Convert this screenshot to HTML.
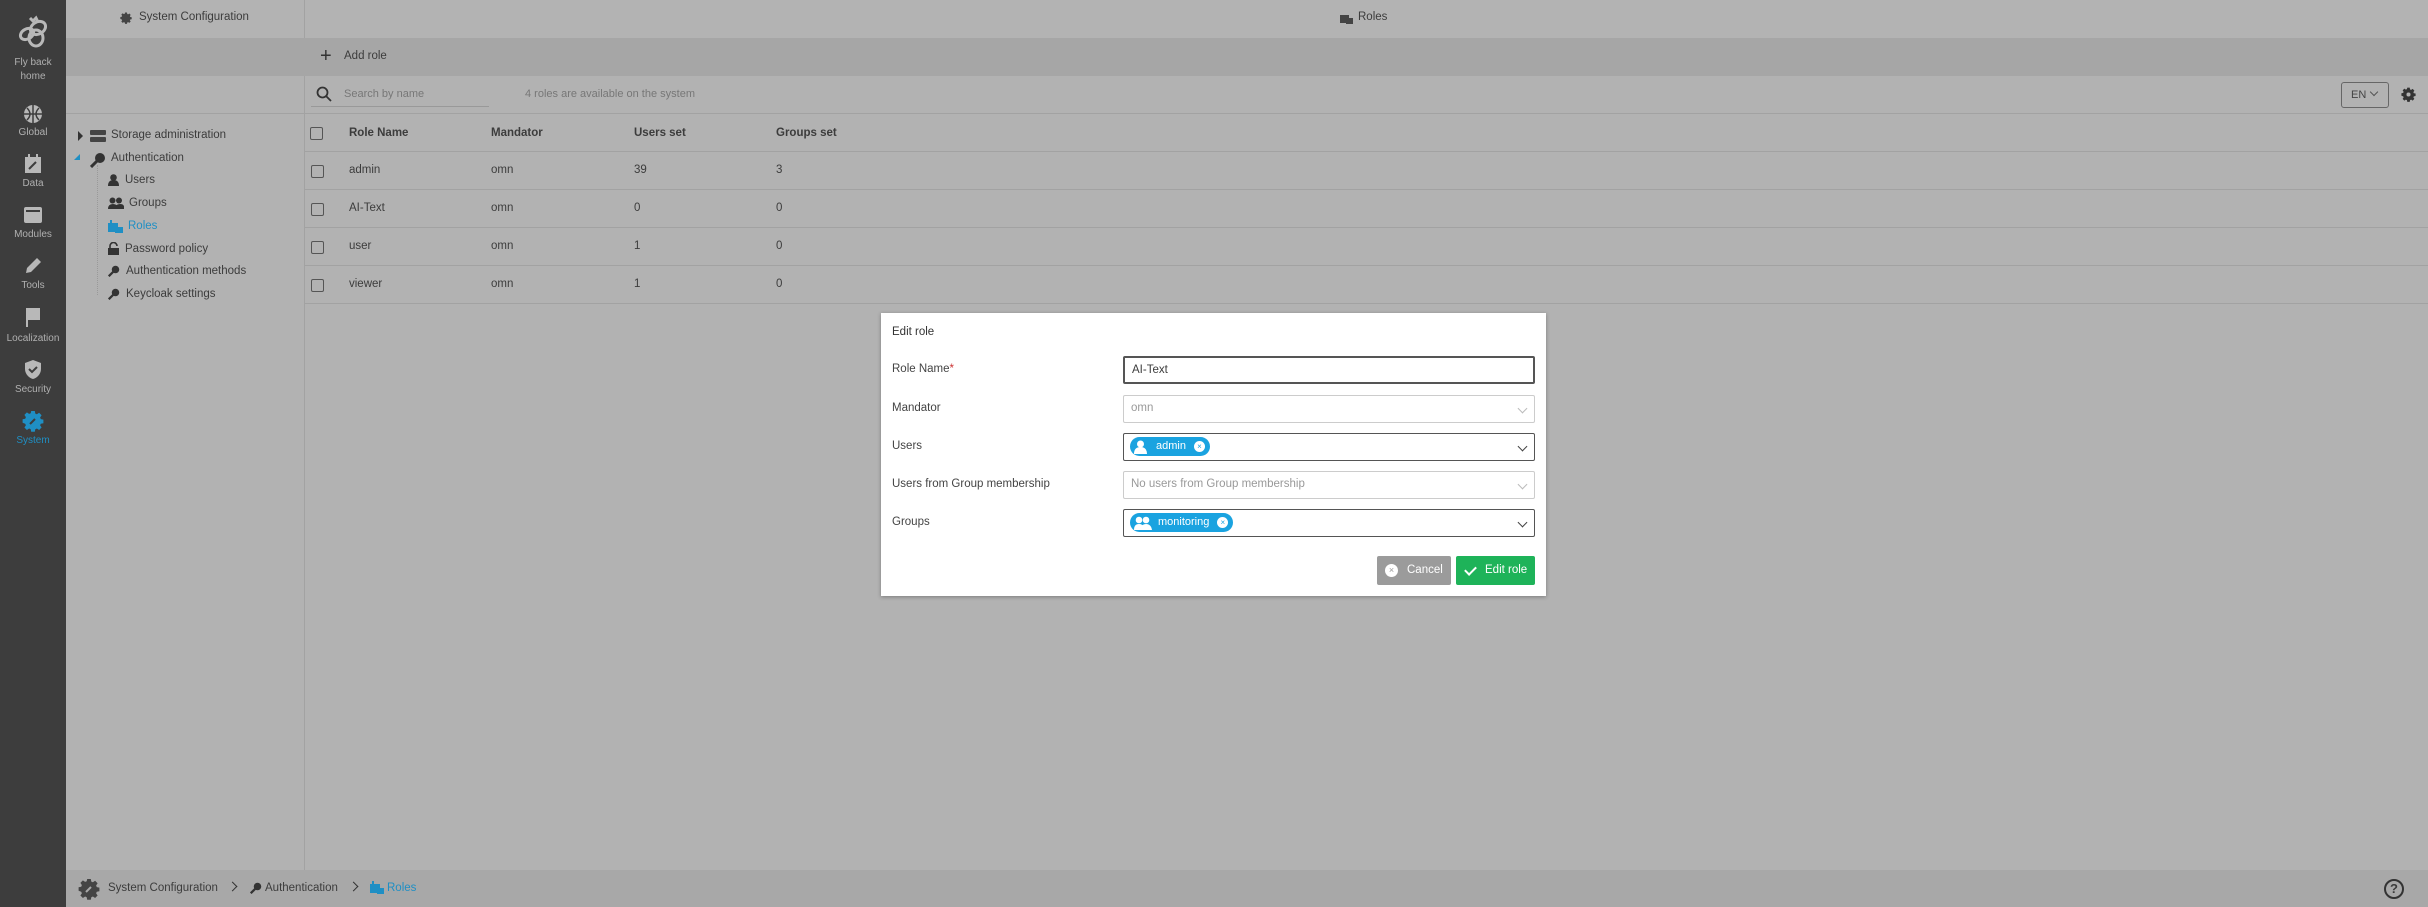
<!DOCTYPE html>
<html><head><meta charset="utf-8"><style>
*{box-sizing:border-box;margin:0;padding:0}
body{width:2428px;height:907px;position:relative;overflow:hidden;background:#b2b2b2;font-family:"Liberation Sans",sans-serif;font-size:11.5px;color:#3c3c3c}
.a{position:absolute}
.sb{left:0;top:0;width:66px;height:907px;background:#3d3d3d}
.si{position:absolute;left:0;width:66px;text-align:center;color:#b0b0b0;font-size:10px}
.line{background:#a2a2a2}
.cb{position:absolute;width:13px;height:13px;border:1.5px solid #555;border-radius:2px}
.t{position:absolute;white-space:nowrap}
.lab{position:absolute;left:11px;color:#444;font-size:11.5px}
.inp{position:absolute;left:242px;width:412px;height:28px;border:1.5px solid #555;border-radius:2px;background:#fff;font-size:11.5px;line-height:25px;padding-left:7px}
.dis{border:1.5px solid #ccc;color:#999}
.chev{position:absolute;right:8px;top:9px;width:7px;height:7px;border-right:1.5px solid #444;border-bottom:1.5px solid #444;transform:rotate(45deg)}
.dis .chev{border-color:#bbb}
.chip{position:absolute;left:6px;top:3px;height:19px;border-radius:10px;background:#1aa3e0;color:#fff;font-size:11px;line-height:19px;padding-left:26px;padding-right:24px}
.chip .x{position:absolute;right:5px;top:4px;width:11px;height:11px;border-radius:50%;background:#fff;color:#1aa3e0;font-size:8px;line-height:11px;text-align:center}
.chip .u{position:absolute;left:4px;top:3px;width:13px;height:14px}
.bc{position:absolute;top:883px;width:7px;height:7px;border-right:1.8px solid #333;border-top:1.8px solid #333;transform:rotate(45deg)}
</style></head><body>
<svg width="0" height="0" style="position:absolute"><defs><path id="cog" d="M9.2 1h3.6l.5 2.6 1.6.7 2.2-1.5 2.5 2.5-1.5 2.2.7 1.6 2.6.5v3.6l-2.6.5-.7 1.6 1.5 2.2-2.5 2.5-2.2-1.5-1.6.7-.5 2.6H9.2l-.5-2.6-1.6-.7-2.2 1.5-2.5-2.5 1.5-2.2-.7-1.6L.6 12.8V9.2l2.6-.5.7-1.6-1.5-2.2 2.5-2.5 2.2 1.5 1.6-.7z"/></defs></svg>
<div class="a sb"></div>
<svg class="a" style="left:16px;top:14px" width="34" height="36" viewBox="0 0 34 36" fill="none" stroke="#b8b8b8" stroke-width="3"><path d="M14 4l3 3 3-3 2 4" /><ellipse cx="22" cy="14" rx="8" ry="6" transform="rotate(-30 22 14)"/><ellipse cx="11" cy="20" rx="7" ry="5" transform="rotate(-30 11 20)"/><ellipse cx="20" cy="24" rx="7" ry="8"/></svg>
<div class="si" style="top:56px;line-height:14px">Fly back<br>home</div>
<svg class="a" style="left:23px;top:104px" width="20" height="20" viewBox="0 0 20 20"><circle cx="10" cy="10" r="9" fill="#b8b8b8"/><path d="M1 10h18M10 1v18M4 4q6 6 0 12M16 4q-6 6 0 12" stroke="#3d3d3d" stroke-width="1.5" fill="none"/></svg>
<div class="si" style="top:127px">Global</div>
<svg class="a" style="left:24px;top:154px" width="18" height="20" viewBox="0 0 18 20"><rect x="1" y="3" width="16" height="16" fill="#b8b8b8"/><rect x="4" y="0" width="2" height="4" fill="#b8b8b8"/><rect x="12" y="0" width="2" height="4" fill="#b8b8b8"/><path d="M5 15l7-7" stroke="#3d3d3d" stroke-width="2"/></svg>
<div class="si" style="top:178px">Data</div>
<svg class="a" style="left:23px;top:206px" width="20" height="18"><rect x="1" y="1" width="18" height="16" rx="2" fill="#b8b8b8"/><rect x="3" y="4" width="14" height="2" fill="#3d3d3d"/></svg>
<div class="si" style="top:229px">Modules</div>
<svg class="a" style="left:23px;top:256px" width="20" height="20" viewBox="0 0 20 20"><path d="M3 17l1-5 10-10 4 4-10 10z" fill="#b8b8b8"/></svg>
<div class="si" style="top:280px">Tools</div>
<svg class="a" style="left:24px;top:307px" width="18" height="20"><path d="M2 1h14v12H4v7H2z" fill="#b8b8b8"/></svg>
<div class="si" style="top:333px">Localization</div>
<svg class="a" style="left:23px;top:359px" width="20" height="21" viewBox="0 0 20 21"><path d="M10 1l8 3v6c0 5-4 9-8 10-4-1-8-5-8-10V4z" fill="#b8b8b8"/><path d="M6 10l3 3 5-5" stroke="#3d3d3d" stroke-width="2" fill="none"/></svg>
<div class="si" style="top:384px">Security</div>
<svg class="a" style="left:22px;top:410px" width="22" height="22" viewBox="0 0 22 22"><use href="#cog" fill="#1f8fc4"/><path d="M8 14l5-5" stroke="#3d3d3d" stroke-width="2"/></svg>
<div class="si" style="top:435px;color:#1f8fc4">System</div>

<!-- header -->
<div class="a" style="left:66px;top:0;width:2362px;height:38px;background:#b3b3b3"></div>
<div class="a line" style="left:304px;top:0;width:1px;height:870px"></div>
<div class="a" style="left:66px;top:38px;width:2362px;height:38px;background:#a6a6a6"></div>
<svg class="a" style="left:120px;top:12px" width="12" height="12" viewBox="0 0 22 22"><use href="#cog" fill="#444"/></svg>
<div class="t" style="left:139px;top:11px">System Configuration</div>
<svg class="a" style="left:1340px;top:12px" width="13" height="12"><rect x="0" y="3" width="9" height="8" fill="#444"/><rect x="6" y="6" width="7" height="6" fill="#444"/></svg>
<div class="t" style="left:1358px;top:11px">Roles</div>
<div class="t" style="left:320px;top:45px;font-size:20px;font-weight:300;color:#333">+</div>
<div class="t" style="left:344px;top:50px">Add role</div>

<!-- search row -->
<svg class="a" style="left:316px;top:86px" width="16" height="16"><circle cx="6.5" cy="6.5" r="5" stroke="#333" stroke-width="1.8" fill="none"/><path d="M10 10l5 5" stroke="#333" stroke-width="1.8"/></svg>
<div class="t" style="left:344px;top:88px;color:#777;font-size:11px">Search by name</div>
<div class="a" style="left:311px;top:106px;width:178px;height:1px;background:#999"></div>
<div class="t" style="left:525px;top:88px;color:#777;font-size:11px">4 roles are available on the system</div>
<div class="a" style="left:2341px;top:82px;width:48px;height:26px;border:1px solid #666;border-radius:3px"></div>
<div class="t" style="left:2351px;top:89px;color:#444;font-size:11px">EN</div>
<div class="a" style="left:2371px;top:89px;width:6px;height:6px;border-right:1px solid #555;border-bottom:1px solid #555;transform:rotate(45deg)"></div>
<svg class="a" style="left:2401px;top:87px" width="15" height="15" viewBox="0 0 22 22"><use href="#cog" fill="#333"/><circle cx="11" cy="11" r="3" fill="#b2b2b2"/></svg>
<div class="a line" style="left:66px;top:113px;width:2362px;height:1px"></div>

<!-- tree -->
<div class="a" style="left:78px;top:131px;width:0;height:0;border-left:5px solid #333;border-top:5px solid transparent;border-bottom:5px solid transparent"></div>
<svg class="a" style="left:90px;top:129px" width="16" height="14"><rect x="0" y="1" width="16" height="5" rx="1" fill="#444"/><rect x="0" y="8" width="16" height="5" rx="1" fill="#444"/></svg>
<div class="t" style="left:111px;top:129px">Storage administration</div>
<div class="a" style="left:74px;top:154px;width:0;height:0;border-right:6px solid #1f8fc4;border-top:6px solid transparent"></div>
<svg class="a" style="left:90px;top:152px" width="16" height="16" viewBox="0 0 16 16"><circle cx="10" cy="6" r="5" fill="#333"/><path d="M7 9l-6 6" stroke="#333" stroke-width="3"/></svg>
<div class="t" style="left:111px;top:152px">Authentication</div>
<div class="a" style="left:97px;top:165px;width:0;height:130px;border-left:1px dotted #999"></div>
<svg class="a" style="left:108px;top:174px" width="11" height="12"><circle cx="5.5" cy="3.5" r="3.3" fill="#333"/><path d="M0 12q0-6 5.5-6t5.5 6z" fill="#333"/></svg>
<div class="t" style="left:125px;top:174px">Users</div>
<svg class="a" style="left:108px;top:197px" width="16" height="12"><circle cx="4.5" cy="3.5" r="3" fill="#333"/><circle cx="11" cy="3.5" r="3" fill="#333"/><path d="M0 12q0-5 5-5t5 5zM7 12q0-5 5-5t4 5z" fill="#333"/></svg>
<div class="t" style="left:129px;top:197px">Groups</div>
<svg class="a" style="left:108px;top:220px" width="15" height="13"><rect x="0" y="3" width="10" height="9" fill="#1f8fc4"/><rect x="2" y="0" width="2" height="4" fill="#1f8fc4"/><rect x="7" y="7" width="8" height="6" fill="#1f8fc4"/></svg>
<div class="t" style="left:128px;top:220px;color:#1f8fc4">Roles</div>
<svg class="a" style="left:108px;top:242px" width="11" height="13"><path d="M2 6V4a3.5 3.5 0 017 0" stroke="#333" stroke-width="1.6" fill="none"/><rect x="0" y="6" width="11" height="7" fill="#333"/></svg>
<div class="t" style="left:125px;top:243px">Password policy</div>
<svg class="a" style="left:108px;top:265px" width="12" height="12" viewBox="0 0 16 16"><circle cx="10" cy="6" r="5" fill="#333"/><path d="M7 9l-6 6" stroke="#333" stroke-width="3"/></svg>
<div class="t" style="left:126px;top:265px">Authentication methods</div>
<svg class="a" style="left:108px;top:288px" width="12" height="12" viewBox="0 0 16 16"><circle cx="10" cy="6" r="5" fill="#333"/><path d="M7 9l-6 6" stroke="#333" stroke-width="3"/></svg>
<div class="t" style="left:126px;top:288px">Keycloak settings</div>

<!-- table -->
<div class="cb" style="left:310px;top:127px"></div>
<div class="t" style="left:349px;top:127px;font-weight:bold">Role Name</div>
<div class="t" style="left:491px;top:127px;font-weight:bold">Mandator</div>
<div class="t" style="left:634px;top:127px;font-weight:bold">Users set</div>
<div class="t" style="left:776px;top:127px;font-weight:bold">Groups set</div>
<div class="a line" style="left:305px;top:151px;width:2123px;height:1px"></div>
<div class="cb" style="left:311px;top:165px"></div><div class="t" style="left:349px;top:164px">admin</div><div class="t" style="left:491px;top:164px">omn</div><div class="t" style="left:634px;top:164px">39</div><div class="t" style="left:776px;top:164px">3</div>
<div class="a line" style="left:305px;top:189px;width:2123px;height:1px"></div>
<div class="cb" style="left:311px;top:203px"></div><div class="t" style="left:349px;top:202px">AI-Text</div><div class="t" style="left:491px;top:202px">omn</div><div class="t" style="left:634px;top:202px">0</div><div class="t" style="left:776px;top:202px">0</div>
<div class="a line" style="left:305px;top:227px;width:2123px;height:1px"></div>
<div class="cb" style="left:311px;top:241px"></div><div class="t" style="left:349px;top:240px">user</div><div class="t" style="left:491px;top:240px">omn</div><div class="t" style="left:634px;top:240px">1</div><div class="t" style="left:776px;top:240px">0</div>
<div class="a line" style="left:305px;top:265px;width:2123px;height:1px"></div>
<div class="cb" style="left:311px;top:279px"></div><div class="t" style="left:349px;top:278px">viewer</div><div class="t" style="left:491px;top:278px">omn</div><div class="t" style="left:634px;top:278px">1</div><div class="t" style="left:776px;top:278px">0</div>
<div class="a line" style="left:305px;top:303px;width:2123px;height:1px"></div>

<!-- footer -->
<div class="a" style="left:66px;top:870px;width:2362px;height:37px;background:#a8a8a8"></div>
<svg class="a" style="left:78px;top:878px" width="22" height="22" viewBox="0 0 22 22"><use href="#cog" fill="#444"/><path d="M8 14l5-5" stroke="#a8a8a8" stroke-width="2"/></svg>
<div class="t" style="left:108px;top:882px">System Configuration</div>
<div class="bc" style="left:229px"></div>
<svg class="a" style="left:250px;top:882px" width="12" height="12" viewBox="0 0 16 16"><circle cx="10" cy="6" r="5" fill="#333"/><path d="M7 9l-6 6" stroke="#333" stroke-width="3"/></svg>
<div class="t" style="left:265px;top:882px">Authentication</div>
<div class="bc" style="left:350px"></div>
<svg class="a" style="left:370px;top:881px" width="14" height="13"><rect x="0" y="3" width="10" height="9" fill="#1f8fc4"/><rect x="2" y="0" width="2" height="4" fill="#1f8fc4"/><rect x="7" y="7" width="7" height="6" fill="#1f8fc4"/></svg>
<div class="t" style="left:387px;top:882px;color:#1f8fc4">Roles</div>
<div class="a" style="left:2384px;top:879px;width:20px;height:20px;border:2px solid #333;border-radius:50%;text-align:center;font-weight:bold;font-size:13px;line-height:16px">?</div>

<!-- modal -->
<div class="a" style="left:881px;top:313px;width:665px;height:283px;background:#fff;box-shadow:0 1px 4px rgba(0,0,0,.3)">
<div class="t" style="left:11px;top:13px;font-size:11.5px;color:#333">Edit role</div>
<div class="lab" style="top:50px">Role Name<span style="color:#c33">*</span></div>
<div class="inp" style="top:43px;border-width:2px">AI-Text</div>
<div class="lab" style="top:89px">Mandator</div>
<div class="inp dis" style="top:82px">omn<div class="chev"></div></div>
<div class="lab" style="top:127px">Users</div>
<div class="inp" style="top:120px"><div class="chip"><svg class="u" viewBox="0 0 13 14"><circle cx="6.5" cy="4" r="3.5" fill="#fff"/><path d="M0 14q0-7 6.5-7t6.5 7z" fill="#fff"/></svg>admin<div class="x">×</div></div><div class="chev"></div></div>
<div class="lab" style="top:165px">Users from Group membership</div>
<div class="inp dis" style="top:158px">No users from Group membership<div class="chev"></div></div>
<div class="lab" style="top:203px">Groups</div>
<div class="inp" style="top:196px"><div class="chip" style="padding-left:28px"><svg class="u" style="width:18px" viewBox="0 0 18 14"><circle cx="5" cy="4" r="3.3" fill="#fff"/><circle cx="12" cy="4" r="3.3" fill="#fff"/><path d="M0 14q0-6 5-6t6 6zM7 14q0-6 5-6t6 6z" fill="#fff"/></svg>monitoring<div class="x">×</div></div><div class="chev"></div></div>
<div class="a" style="left:496px;top:243px;width:74px;height:29px;background:#9b9b9b;border-radius:2px;color:#fff;font-size:11.5px;line-height:29px;padding-left:30px">Cancel<div class="a" style="left:8px;top:8px;width:13px;height:13px;border-radius:50%;background:#fff;color:#999;font-size:9px;line-height:13px;text-align:center">×</div></div>
<div class="a" style="left:575px;top:243px;width:79px;height:29px;background:#1eb359;border-radius:2px;color:#fff;font-size:11.5px;line-height:29px;padding-left:29px">Edit role<div class="a" style="left:11px;top:8px;width:7px;height:11px;border-right:2px solid #fff;border-bottom:2px solid #fff;transform:rotate(45deg)"></div></div>
</div>
</body></html>
